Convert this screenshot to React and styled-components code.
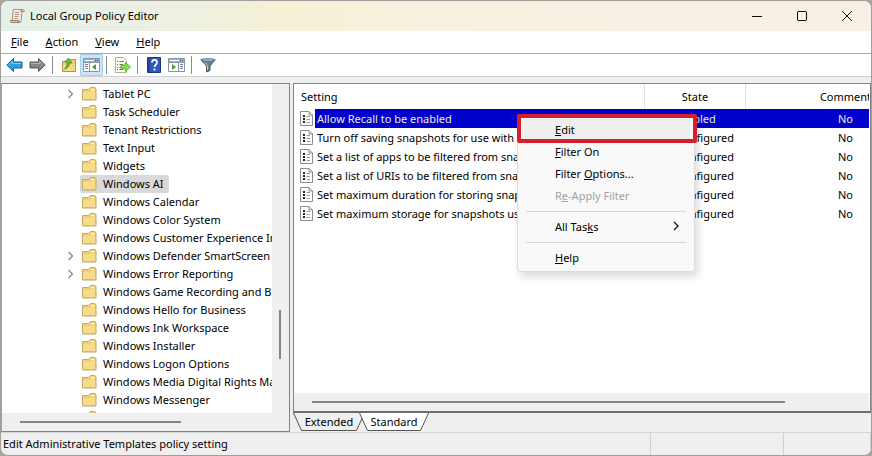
import React from "react";
import styled, { createGlobalStyle, css } from "styled-components";

const Global = createGlobalStyle`
  * { box-sizing: border-box; }
  body { margin: 0; background: #a9a598; }
  body, button { font-family: "Noto Sans", "Open Sans", sans-serif; font-size: 11px; color: #000; }
  button { border: 0; padding: 0; background: none; }
`;

const Window = styled.div`
  height: 100vh;
  display: flex;
  flex-direction: column;
  border: 1px solid #a09f9c;
  border-radius: 8px;
  overflow: hidden;
  background: #efefef;
`;

const TitleBar = styled.header`
  flex: none;
  height: 30px;
  display: flex;
  align-items: center;
  padding: 0 2px 0 8px;
  background: linear-gradient(90deg, #e5f0e9 0%, #eef0e2 20%, #f6f0d6 32%, #f8f0df 50%, #f8f0e5 75%);
`;

const Title = styled.h1`
  flex: 1;
  margin: 0 0 0 5px;
  padding-bottom: 2px;
  font-size: 11px;
  font-weight: 400;
`;

const Caption = styled.button`
  width: 45px;
  height: 30px;
  display: grid;
  place-items: center;
`;

const MenuBar = styled.nav`
  flex: none;
  height: 23px;
  display: flex;
  align-items: center;
  gap: 17px;
  padding: 0 0 2px 10px;
  background: #fff;
  border-bottom: 1px solid #a6a6a6;
`;

const ToolBar = styled.div`
  flex: none;
  height: 23px;
  display: flex;
  align-items: center;
  padding-left: 2px;
  background: #fff;
  border-bottom: 1px solid #d2d2d2;
`;

const Tool = styled.button`
  width: 23px;
  height: 22px;
  display: grid;
  place-items: center;
  border-radius: 2px;
  ${(p) => p.$pressed && css`background: #cce4f7; box-shadow: inset 0 0 0 1px #a5cdee;`}
`;

const Divider = styled.span`
  width: 1px;
  height: 18px;
  margin: 0 4px 0 3px;
  background: #8b8b8b;
`;

const Panes = styled.main`
  flex: 1;
  min-height: 0;
  display: grid;
  grid-template-columns: 289px minmax(0, 1fr);
  column-gap: 3px;
  padding-top: 6px;
`;

const TreePane = styled.section`
  min-height: 0;
  display: grid;
  grid-template-columns: minmax(0, 1fr) 17px;
  grid-template-rows: minmax(0, 1fr) 18px;
  border: 1px solid #828282;
  border-left-color: #a0a0a0;
`;

const Tree = styled.ul`
  margin: 0;
  padding: 1px 0 0;
  list-style: none;
  overflow: hidden;
  background: #fff;
`;

const Node = styled.li`
  height: 18px;
  display: flex;
  align-items: center;
  padding-left: 64px;
`;

const Toggle = styled.span`
  flex: none;
  width: 14px;
  height: 18px;
  display: grid;
  place-items: center start;
`;

const NodeLabel = styled.button`
  flex: none;
  height: 18px;
  display: flex;
  align-items: center;
  gap: 6px;
  padding: 0 5px 0 2px;
  border-radius: 2px;
  white-space: nowrap;
  background: ${(p) => (p.$selected ? "#d9d9d9" : "transparent")};
`;

const NodeText = styled.span`
  padding-bottom: 2px;
`;

const VScroll = styled.div`
  display: flex;
  justify-content: center;
  padding: 226px 1px 0 0;
`;

const VThumb = styled.div`
  width: 2px;
  height: 49px;
  background: #858585;
`;

const HScroll = styled.div`
  flex: none;
  height: 18px;
  display: flex;
  align-items: center;
  padding-left: 18px;
  background: #efefef;
`;

const HThumb = styled.div`
  width: ${(p) => p.$size};
  height: 2px;
  background: #858585;
`;

const Details = styled.section`
  min-width: 0;
  min-height: 0;
  display: flex;
  flex-direction: column;
`;

const ListPane = styled.div`
  position: relative;
  flex: 1;
  min-height: 0;
  display: flex;
  flex-direction: column;
  padding-right: 1px;
  background: #fff;
  border: 1px solid #828282;
  border-bottom: 2px solid #6e6e6e;
`;

const ListView = styled.div`
  flex: 1;
  min-height: 0;
  overflow: hidden;
`;

const Table = styled.table`
  width: calc(100% + 77px);
  table-layout: fixed;
  border-collapse: collapse;
`;

const Col = styled.col`
  width: ${(p) => p.$width};
`;

const Head = styled.th`
  height: 25px;
  padding: 0 0 0 ${(p) => (p.$lead ? "7px" : "0")};
  font-weight: 400;
  text-align: ${(p) => (p.$lead ? "left" : "center")};
  border-right: 1px solid #e0e0e0;
`;

const Cell = styled.td`
  height: 19px;
  padding: 0;
  line-height: 18px;
  text-align: ${(p) => (p.$lead ? "left" : "center")};
  white-space: nowrap;
  overflow: hidden;
  color: ${(p) => (p.$selected ? "#ececcc" : "#000")};
  background: ${(p) => (p.$selected ? "#0000cd" : "transparent")};
`;

const Setting = styled.span`
  display: flex;
  align-items: center;
  height: 19px;
`;

const IconSlot = styled.span`
  flex: none;
  width: 21px;
  height: 19px;
  display: grid;
  place-items: center end;
  padding-right: 2px;
  background: #fff;
`;

const Name = styled.span`
  padding-left: 2px;
`;

const Menu = styled.div`
  position: absolute;
  left: 223px;
  top: 30px;
  width: 178px;
  display: flex;
  flex-direction: column;
  padding: 4px 0 2px;
  background: #f9f9f9;
  border: 1px solid #dcdcdc;
  border-radius: 3px;
  box-shadow: 3px 5px 8px rgba(0, 0, 0, 0.14);
`;

const MenuItem = styled.button`
  height: 22px;
  display: flex;
  align-items: center;
  justify-content: space-between;
  margin: 0 4px;
  padding: 0 9px 2px 33px;
  white-space: pre;
  text-align: left;
  background: ${(p) => (p.$active ? "#efefef" : "transparent")};
  color: ${(p) => (p.disabled ? "#a2a2a2" : "#000")};
`;

const MenuRule = styled.hr`
  width: 160px;
  height: 1px;
  margin: 4px 8px;
  border: 0;
  background: #d5d5d5;
`;

const Highlight = styled.div`
  position: absolute;
  left: -1px;
  top: -1px;
  width: 180px;
  height: 29px;
  border: 4px solid #d51f2c;
  border-radius: 2px;
  pointer-events: none;
`;

const Tabs = styled.div`
  flex: none;
  height: 19px;
  display: flex;
`;

const Tab = styled.button`
  position: relative;
  width: ${(p) => p.$width};
  height: 18px;
  line-height: 18px;
  margin-left: ${(p) => (p.$active ? "-6px" : "0")};
`;

const TabShape = styled.svg`
  position: absolute;
  inset: 0;
  width: 100%;
  height: 100%;
`;

const TabText = styled.span`
  position: relative;
`;

const StatusBar = styled.footer`
  flex: none;
  height: 23px;
  display: flex;
  border-top: 1px solid #d4d4d4;
`;

const StatusCell = styled.div`
  flex: ${(p) => p.$flex};
  padding: 2px 0 0 2px;
  line-height: 18px;
  border-right: 1px solid #d0d0d0;
`;

const Stroke = ({ d, size = 10, color = "#111", w = 1 }) => (
  <svg width={size} height={size} viewBox="0 0 10 10" fill="none" stroke={color} strokeWidth={w}>
    <path d={d} />
  </svg>
);

const ScrollLogo = () => (
  <svg width="16" height="16" viewBox="0 0 16 16" strokeWidth="1">
    <path d="M4.500 1.500H14c1 0 1.500 1 1 2h-2L12 14H3L4 3z" fill="#f3eadb" stroke="#a4927c" />
    <path d="M13 1.500c-1.500 0-1 2-1 2h3.500M1.500 12.500h8.500c-.5 1 0 2 1 2H3c-1.500 0-2-1-1.500-2z" fill="#d9c7a8" stroke="#907d66" />
    <path d="M6 4.500h4M6 6.500h4M5.500 8.500h4M5.500 10.500h3" stroke="#a9977f" />
  </svg>
);

const Arrow = ({ flip }) => (
  <svg width="17" height="16" viewBox="0 0 17 16">
    <g transform={flip ? "translate(17 0) scale(-1 1)" : undefined}>
      <path d="M.8 8 7.500 1.500v3.500H16v6H7.500V14.500z" fill={flip ? "#858585" : "#2ba0e4"} stroke={flip ? "#555" : "#18608f"} />
      <path d="M3 7.500 6.500 4.500v2H15" fill="none" stroke={flip ? "#b5b5b5" : "#7fd0f8"} />
    </g>
  </svg>
);

const Folder = () => (
  <svg width="15" height="14" viewBox="0 0 15 14">
    <path d="M.5 2.500h6l2-2H13l1 1.500v11H.5z" fill="#f1cf73" stroke="#c4a865" />
    <path d="M9 2.500h3.500" stroke="#fffbe8" />
    <path d="M1 5h7l1.500-1.500H13.500V12.500H1z" fill="#f8dc8d" />
    <path d="M1.500 12.500h12v-9" fill="none" stroke="#dcb964" />
  </svg>
);

const UpFolder = () => (
  <svg width="16" height="16" viewBox="0 0 16 16">
    <path d="M1.500 4.500h6l1.500-2h5.500v12h-13z" fill="#efd071" stroke="#b4954a" />
    <path d="M2 7.500h12v6.500H2z" fill="#f5d984" />
    <path d="M3.500 12C7 11 8.500 9 8.500 6H11L7.500 1 3.500 5h2.500c0 3-.5 5-2.500 7z" fill="#69bd35" stroke="#458526" strokeWidth=".7" />
  </svg>
);

const Panel = ({ right }) => (
  <svg width="17" height="14" viewBox="0 0 17 14">
    <path d="M.5.500h16v13H.5z" fill="#fff" stroke="#8496a8" />
    <path d="M1 1h15v3H1z" fill="#9fb1c3" />
    <path d="M2 2.500h9" stroke="#fff" />
    <path d="M12 2.500h1m1 0h1" stroke="#314b68" />
    <path d={right ? "M10.500 4v9.500M.5 4.500h16" : "M6.500 4v9.500M.5 4.500h16"} stroke="#8496a8" />
    <path d={right ? "M12 6.500h3M12 8.500h3M12 10.500h3" : "M2 6.500h3M2 8.500h3M2 10.500h3"} stroke="#6d8297" />
    <path d={right ? "M4 6l4 3-4 3z" : "M13 6v6L9 9z"} fill="#4d9b32" />
  </svg>
);

const Export = () => (
  <svg width="17" height="16" viewBox="0 0 17 16">
    <path d="M1.500.500h8l3 3v12h-11z" fill="#fffdf2" stroke="#b5ad91" />
    <path d="M3 4.500h1m1.500 0H10M3 7.500h1m1.500 0H9M3 10.500h1m1.500 0H9M3 12.500h1m1.500 0H9" stroke="#77776c" />
    <path d="M7 8h4.500V5.500L16.500 10l-5 4.500V12H7z" fill="#8add3e" stroke="#4ca52c" strokeWidth=".8" />
  </svg>
);

const Help = () => (
  <svg width="14" height="16" viewBox="0 0 14 16">
    <path d="M.5.500h13v15H.5z" fill="#3158ba" stroke="#203878" />
    <path d="M2 1v14" stroke="#17357e" />
    <path d="M5 5.500C5 2 10 2 10 5.500c0 2-2.500 2.200-2.500 4.500" fill="none" stroke="#fff" strokeWidth="1.700" />
    <circle cx="7.500" cy="12.500" r="1.100" fill="#fff" />
  </svg>
);

const Funnel = () => (
  <svg width="16" height="15" viewBox="0 0 16 15">
    <path d="M.8 1.500h14.400L10 8v4.500L6.500 14V8z" fill="#69818f" stroke="#465a65" />
    <ellipse cx="8" cy="2" rx="7" ry="1.300" fill="#abc1cb" stroke="#5d7480" />
    <path d="M5 4.500 7.500 7.500V12" fill="none" stroke="#bed1da" />
  </svg>
);

const Policy = () => (
  <svg width="13" height="15" viewBox="0 0 13 15">
    <path d="M.5.500h8.500l3.500 3.500v10.500H.5z" fill="#fff" stroke="#8d8d8d" />
    <path d="M9 .5V4h3.500" fill="none" stroke="#8d8d8d" />
    <path d="M3 4h2v2H3zM3 7h2v2H3zM3 10h2v2H3z" fill="#222" />
    <path d="M6.500 5.500H10M6.500 8.500H10M6.500 11.500H10" stroke="#999" />
  </svg>
);

const TREE = [
  ["Tablet PC", true], ["Task Scheduler"], ["Tenant Restrictions"], ["Text Input"], ["Widgets"],
  ["Windows AI"], ["Windows Calendar"], ["Windows Color System"], ["Windows Customer Experience Improvement Program"],
  ["Windows Defender SmartScreen", true], ["Windows Error Reporting", true],
  ["Windows Game Recording and Broadcasting"], ["Windows Hello for Business"], ["Windows Ink Workspace"],
  ["Windows Installer"], ["Windows Logon Options"], ["Windows Media Digital Rights Management"],
  ["Windows Messenger"], ["Windows Mobility Center"],
];

const POLICIES = [
  ["Allow Recall to be enabled", "Enabled"],
  ["Turn off saving snapshots for use with Recall", "Not configured"],
  ["Set a list of apps to be filtered from snapshots for Recall", "Not configured"],
  ["Set a list of URIs to be filtered from snapshots for Recall", "Not configured"],
  ["Set maximum duration for storing snapshots used by Recall", "Not configured"],
  ["Set maximum storage for snapshots used by Recall", "Not configured"],
];

export default function App() {
  return (
    <>
      <Global />
      <Window>
        <TitleBar>
          <ScrollLogo />
          <Title>Local Group Policy Editor</Title>
          <Caption aria-label="Minimize"><Stroke d="M0 5.500h10" /></Caption>
          <Caption aria-label="Maximize"><Stroke d="M1 .5h8l.5.5v8l-.5.5H1L.5 9V1z" /></Caption>
          <Caption aria-label="Close"><Stroke d="M0 0l10 10M10 0L0 10" /></Caption>
        </TitleBar>
        <MenuBar>
          <button><u>F</u>ile</button>
          <button><u>A</u>ction</button>
          <button><u>V</u>iew</button>
          <button><u>H</u>elp</button>
        </MenuBar>
        <ToolBar>
          <Tool aria-label="Back"><Arrow /></Tool>
          <Tool aria-label="Forward"><Arrow flip /></Tool>
          <Divider />
          <Tool aria-label="Up one level"><UpFolder /></Tool>
          <Tool aria-label="Console tree" $pressed><Panel /></Tool>
          <Divider />
          <Tool aria-label="Export list"><Export /></Tool>
          <Divider />
          <Tool aria-label="Help"><Help /></Tool>
          <Tool aria-label="Action pane"><Panel right /></Tool>
          <Divider />
          <Tool aria-label="Filter"><Funnel /></Tool>
        </ToolBar>
        <Panes>
          <TreePane>
            <Tree>
              {TREE.map(([name, parent]) => (
                <Node key={name}>
                  <Toggle>{parent && <Stroke d="M2.500 1l4 4-4 4" color="#888" w={1.3} />}</Toggle>
                  <NodeLabel $selected={name === "Windows AI"}>
                    <Folder />
                    <NodeText>{name}</NodeText>
                  </NodeLabel>
                </Node>
              ))}
            </Tree>
            <VScroll><VThumb /></VScroll>
            <HScroll><HThumb $size="161px" /></HScroll>
          </TreePane>
          <Details>
            <ListPane>
              <ListView>
                <Table>
                  <colgroup><Col /><Col $width="101px" /><Col $width="200px" /></colgroup>
                  <thead>
                    <tr><Head $lead>Setting</Head><Head>State</Head><Head>Comment</Head></tr>
                  </thead>
                  <tbody>
                    {POLICIES.map(([name, state], i) => (
                      <tr key={name}>
                        <Cell $lead $selected={i === 0}>
                          <Setting><IconSlot><Policy /></IconSlot><Name>{name}</Name></Setting>
                        </Cell>
                        <Cell $selected={i === 0}>{state}</Cell>
                        <Cell $selected={i === 0}>No</Cell>
                      </tr>
                    ))}
                  </tbody>
                </Table>
              </ListView>
              <HScroll><HThumb $size="85%" /></HScroll>
              <Menu role="menu">
                <MenuItem role="menuitem" $active><span><u>E</u>dit</span></MenuItem>
                <MenuItem role="menuitem"><span><u>F</u>ilter On</span></MenuItem>
                <MenuItem role="menuitem"><span>Filter <u>O</u>ptions...</span></MenuItem>
                <MenuItem role="menuitem" disabled><span>R<u>e</u>-Apply Filter</span></MenuItem>
                <MenuRule />
                <MenuItem role="menuitem"><span>All Tas<u>k</u>s</span><Stroke d="M3 1l4 4-4 4" w={1.3} /></MenuItem>
                <MenuRule />
                <MenuItem role="menuitem"><span><u>H</u>elp</span></MenuItem>
                <Highlight />
              </Menu>
            </ListPane>
            <Tabs>
              <Tab $width="72px">
                <TabShape viewBox="0 0 72 18" fill="#efefef" stroke="#555"><path d="M.5 0l8 17.500h55L71.500 0" /></TabShape>
                <TabText>Extended</TabText>
              </Tab>
              <Tab $width="70px" $active>
                <TabShape viewBox="0 0 70 18" fill="#fff" stroke="#555"><path d="M.5 0l8 17.500h53L69.500 0" /></TabShape>
                <TabText>Standard</TabText>
              </Tab>
            </Tabs>
          </Details>
        </Panes>
        <StatusBar>
          <StatusCell $flex="1">Edit Administrative Templates policy setting</StatusCell>
          <StatusCell $flex="0 0 133px" />
          <StatusCell $flex="0 0 87px" />
        </StatusBar>
      </Window>
    </>
  );
}
